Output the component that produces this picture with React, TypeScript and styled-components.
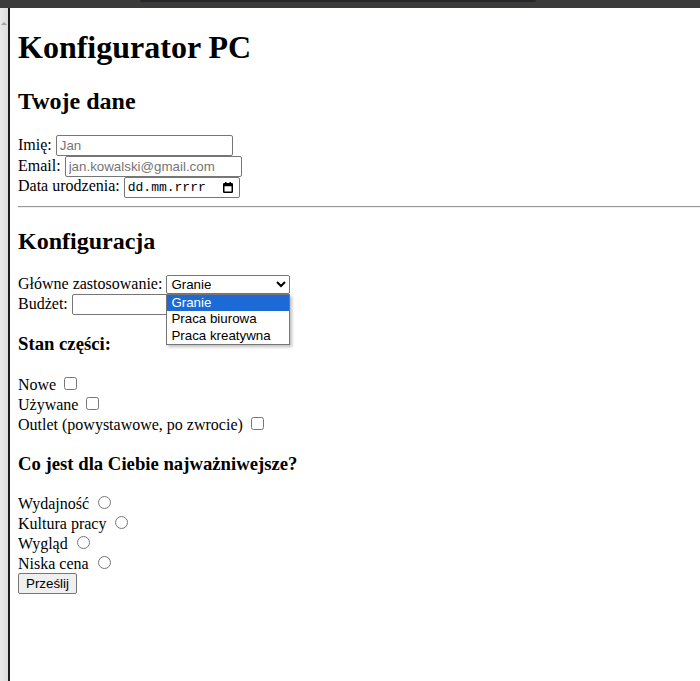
import React from "react";
import styled, { createGlobalStyle } from "styled-components";

const Global = createGlobalStyle`
  html, body { margin: 0; padding: 0; background: #fff; }
  body { font-family: "Liberation Serif", "Times New Roman", serif; font-size: 16px; color: #000; }
`;

const Frame = styled.div`
  width: 700px;
  height: 681px;
  display: grid;
  grid-template-rows: 8px 1fr;
  overflow: hidden;
`;

const TopBar = styled.div`
  background: #3b3b3b;
  display: flex;
  align-items: flex-start;
  padding-left: 140px;
`;

const TabEdge = styled.div`
  width: 396px;
  height: 2px;
  background: #26262a;
  border-radius: 0 0 6px 6px;
`;

const Main = styled.div`
  display: flex;
  min-height: 0;
`;

const ScrollStrip = styled.div`
  width: 8px;
  background: linear-gradient(to right, #e9e9e9, #dcdcdc);
  position: relative;
  &::before {
    content: "";
    position: absolute;
    left: 1px;
    top: 14px;
    border-left: 3px solid transparent;
    border-right: 3px solid transparent;
    border-bottom: 3px solid #a3a3a3;
  }
`;

const Edge = styled.div`
  width: 2px;
  background: #1c1c1c;
`;

const Content = styled.div`
  flex: 1;
  padding: 0 0 8px 8px;
  overflow: hidden;
`;

const Title = styled.h1`
  font-size: 32px;
  font-weight: bold;
  margin: 21.44px 0;
`;

const Section = styled.h2`
  font-size: 24px;
  font-weight: bold;
  margin: 19.92px 0;
`;

const Sub = styled.h3`
  font-size: 18.72px;
  font-weight: bold;
  margin: 18.72px 0;
`;

const Row = styled.div``;

const TextInput = styled.input`
  font-family: "Liberation Sans", Arial, sans-serif;
  font-size: 13.333px;
  box-sizing: border-box;
  width: 177px;
  padding: 2px 3px;
  border: 1px solid #767676;
  border-radius: 2px;
  &::placeholder { color: #757575; }
`;

const DateBox = styled.span`
  display: inline-flex;
  align-items: center;
  justify-content: space-between;
  box-sizing: border-box;
  width: 116px;
  height: 21px;
  padding: 0 6px 0 3px;
  border: 1px solid #767676;
  border-radius: 2px;
  font-family: "Liberation Mono", "Courier New", monospace;
  font-size: 13px;
  vertical-align: baseline;
`;

const SelectWrap = styled.span`
  position: relative;
  display: inline-block;
`;

const Select = styled.select`
  font-family: "Liberation Sans", Arial, sans-serif;
  font-size: 13.333px;
  width: 124px;
  border: 1px solid #767676;
  border-radius: 2px;
  background: #fff;
  color: #000;
`;

const ListBox = styled.div`
  position: absolute;
  left: 0;
  top: 100%;
  width: 124px;
  box-sizing: border-box;
  background: #fff;
  border: 1px solid #767676;
  box-shadow: 2px 2px 3px rgba(0, 0, 0, 0.25);
  font-family: "Liberation Sans", Arial, sans-serif;
  font-size: 13.333px;
  z-index: 2;
`;

const Option = styled.div<{ $active?: boolean }>`
  height: 16.5px;
  line-height: 16px;
  padding-left: 4px;
  background: ${(p) => (p.$active ? "#1b6ad6" : "transparent")};
  color: ${(p) => (p.$active ? "#fff" : "#000")};
`;

const Check = styled.input`
  margin: 3px 3px 3px 4px;
  width: 13px;
  height: 13px;
`;

const Radio = styled.input`
  margin: 3px 3px 0 5px;
  width: 13px;
  height: 13px;
`;

const Rule = styled.hr`
  margin: 8px 0;
  border: 0;
  border-top: 1px solid #9a9a9a;
  border-bottom: 1px solid #eeeeee;
`;

const Button = styled.button`
  font-family: "Liberation Sans", Arial, sans-serif;
  font-size: 13.333px;
  padding: 2px 7px;
  border: 1px solid #767676;
  border-radius: 2px;
  background: #efefef;
  color: #000;
`;

const CalendarIcon = () => (
  <svg width="10" height="11" viewBox="0 0 10 11">
    <rect x="0.75" y="1.75" width="8.5" height="8.5" fill="none" stroke="#000" strokeWidth="1.5" rx="0.5" />
    <rect x="0.75" y="1.75" width="8.5" height="2.5" fill="#000" />
    <rect x="2" y="0" width="1.5" height="2" fill="#000" />
    <rect x="6.5" y="0" width="1.5" height="2" fill="#000" />
  </svg>
);

export default function App() {
  return (
    <>
      <Global />
      <Frame>
        <TopBar>
          <TabEdge />
        </TopBar>
        <Main>
          <ScrollStrip />
          <Edge />
          <Content>
            <Title>Konfigurator PC</Title>
            <Section>Twoje dane</Section>
            <Row>
              Imię: <TextInput type="text" placeholder="Jan" />
            </Row>
            <Row>
              Email: <TextInput type="text" placeholder="jan.kowalski@gmail.com" />
            </Row>
            <Row>
              Data urodzenia:{" "}
              <DateBox>
                <span>dd.mm.rrrr</span>
                <CalendarIcon />
              </DateBox>
            </Row>
            <Rule />
            <Section>Konfiguracja</Section>
            <Row>
              Główne zastosowanie:{" "}
              <SelectWrap>
                <Select defaultValue="granie">
                  <option value="granie">Granie</option>
                  <option value="biuro">Praca biurowa</option>
                  <option value="kreatywna">Praca kreatywna</option>
                </Select>
                <ListBox>
                  <Option $active>Granie</Option>
                  <Option>Praca biurowa</Option>
                  <Option>Praca kreatywna</Option>
                </ListBox>
              </SelectWrap>
            </Row>
            <Row>
              Budżet: <TextInput type="text" />
            </Row>
            <Sub>Stan części:</Sub>
            <Row>
              Nowe <Check type="checkbox" />
            </Row>
            <Row>
              Używane <Check type="checkbox" />
            </Row>
            <Row>
              Outlet (powystawowe, po zwrocie) <Check type="checkbox" />
            </Row>
            <Sub>Co jest dla Ciebie najważniwejsze?</Sub>
            <Row>
              Wydajność <Radio type="radio" name="prio" />
            </Row>
            <Row>
              Kultura pracy <Radio type="radio" name="prio" />
            </Row>
            <Row>
              Wygląd <Radio type="radio" name="prio" />
            </Row>
            <Row>
              Niska cena <Radio type="radio" name="prio" />
            </Row>
            <Button type="button">Prześlij</Button>
          </Content>
        </Main>
      </Frame>
    </>
  );
}
